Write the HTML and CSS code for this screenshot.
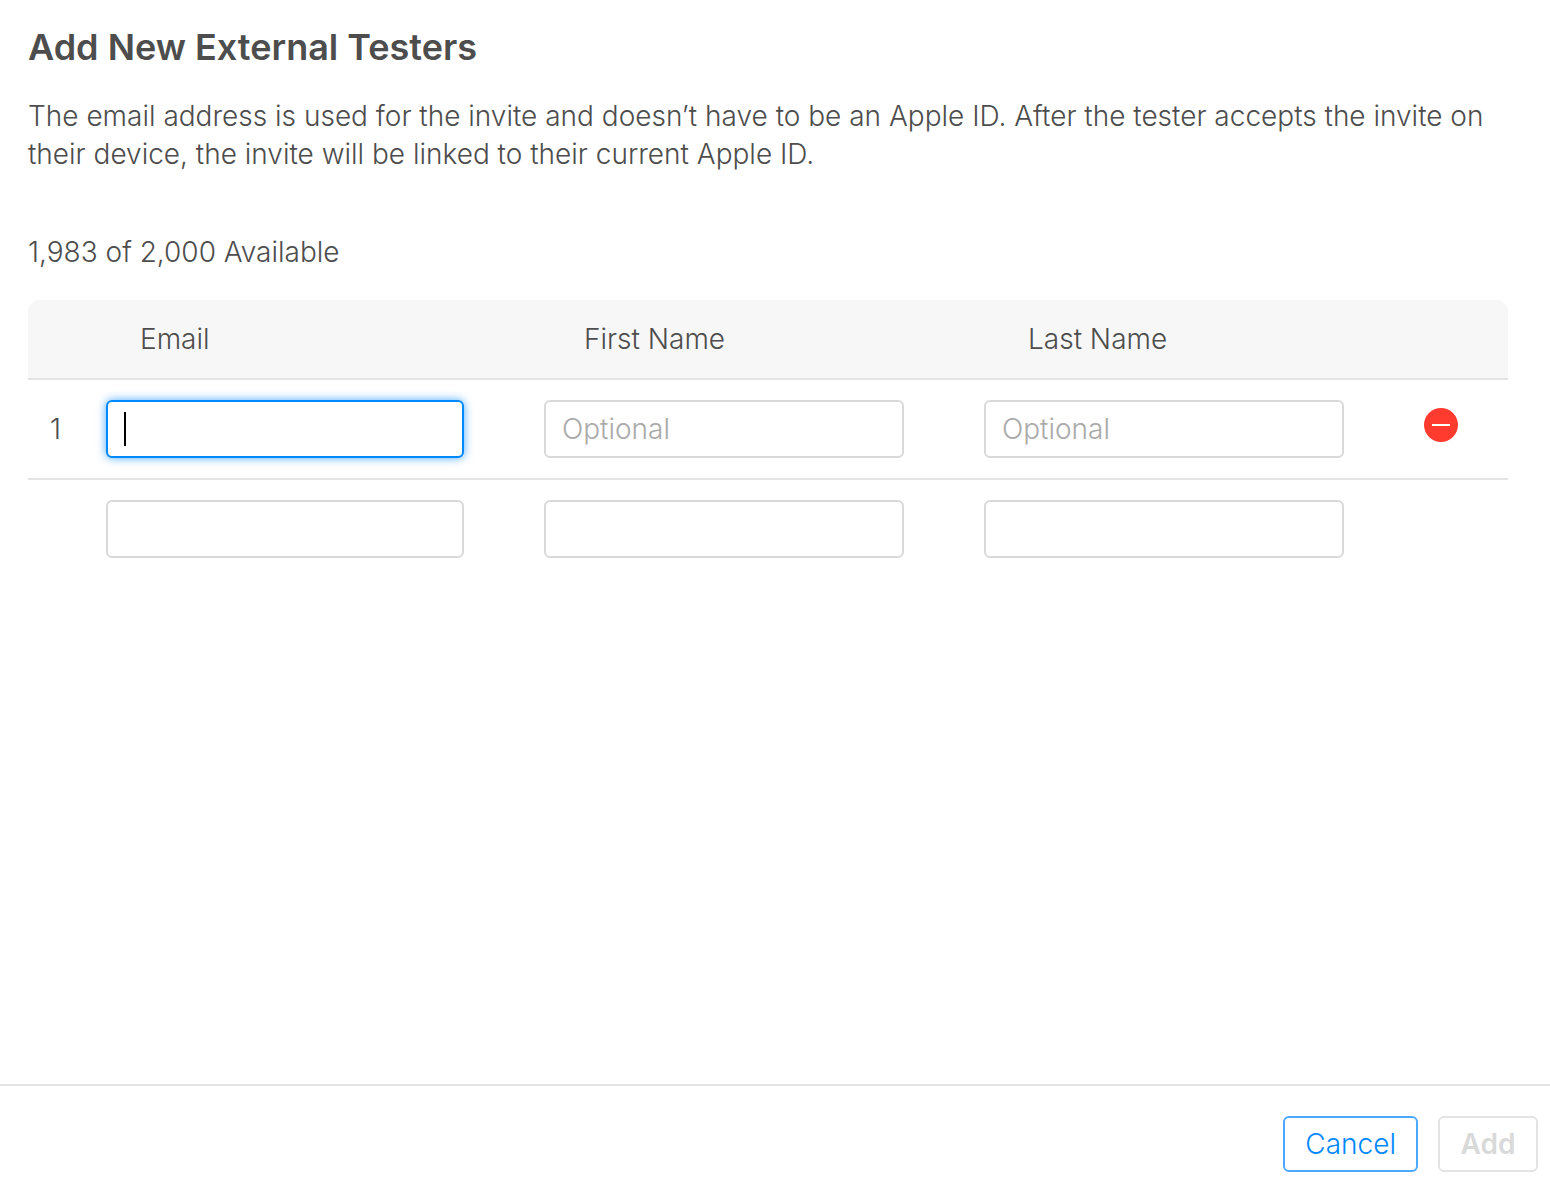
FILE: index.html
```html
<!DOCTYPE html>
<html lang="en">
<head>
<meta charset="utf-8">
<meta name="viewport" content="width=device-width, initial-scale=1">
<title>Add New External Testers</title>
<link rel="stylesheet" href="styles.css">
</head>
<body>
<form class="dialog">
  <main class="content">
    <h1 class="title">Add New External Testers</h1>
    <p class="intro">The email address is used for the invite and doesn’t have to be an Apple ID. After the tester accepts the invite on their device, the invite will be linked to their current Apple ID.</p>
    <p class="available">1,983 of 2,000 Available</p>

    <table class="testers">
      <thead>
        <tr class="head-row">
          <th></th>
          <th scope="col" id="col-email">Email</th>
          <th scope="col" id="col-first">First Name</th>
          <th scope="col" id="col-last">Last Name</th>
        </tr>
      </thead>
      <tbody>
        <tr class="row">
          <td class="number">1</td>
          <td class="cell">
            <div class="field-wrap">
              <input class="field field-active" type="email" aria-labelledby="col-email">
              <span class="caret"></span>
            </div>
          </td>
          <td class="cell"><input class="field" type="text" placeholder="Optional" aria-labelledby="col-first"></td>
          <td class="cell"><input class="field" type="text" placeholder="Optional" aria-labelledby="col-last"></td>
          <td class="action">
            <button class="remove" type="button" aria-label="Remove tester">
              <svg width="34" height="34" viewBox="0 0 34 34" aria-hidden="true">
                <circle cx="17" cy="17" r="17" fill="#ff3b30"/>
                <rect x="8" y="16" width="18" height="2" fill="#fff"/>
              </svg>
            </button>
          </td>
        </tr>
        <tr class="row">
          <td class="number"></td>
          <td class="cell"><input class="field" type="email" aria-labelledby="col-email"></td>
          <td class="cell"><input class="field" type="text" aria-labelledby="col-first"></td>
          <td class="cell"><input class="field" type="text" aria-labelledby="col-last"></td>
          <td class="action"></td>
        </tr>
      </tbody>
    </table>
  </main>

  <footer class="footer">
    <button class="button cancel" type="button">Cancel</button>
    <button class="button add" type="submit" disabled>Add</button>
  </footer>
</form>
</body>
</html>
```
FILE: styles.css
```css
* {
  box-sizing: border-box;
}

body {
  margin: 0;
  background: #fff;
  color: #4d4d4d;
  font: 300 28px/38px Inter, "Liberation Sans", sans-serif;
}

.dialog {
  display: flex;
  flex-direction: column;
  min-height: 100vh;
}

.content {
  flex: 1;
  padding: 24px 42px 24px 28px;
}

.title {
  margin: 0 0 27px;
  font-size: 36px;
  line-height: 46px;
  font-weight: 600;
}

.intro {
  margin: 0 0 60px;
}

.available {
  margin: 0 0 29px;
}

/* Table */

.testers,
.testers thead,
.testers tbody {
  display: block;
}

.head-row {
  display: grid;
  grid-template-columns: 112px 444fr 444fr 480fr;
  border-bottom: 2px solid #e3e3e3;
  background: #f7f7f7;
}

.testers {
  overflow: hidden;
  border-radius: 12px 12px 0 0;
}

.head-row th {
  padding: 20px 0;
  font-weight: 300;
  text-align: left;
}

.row {
  display: grid;
  grid-template-columns: 78px 438fr 440fr 440fr 84px;
  border-bottom: 2px solid #e3e3e3;
}

.row:last-child {
  border-bottom: 0;
}

.number {
  padding: 30px 22px;
}

.cell {
  padding: 20px 80px 20px 0;
}

.action {
  padding: 28px 0;
}

.field-wrap {
  position: relative;
}

.field {
  display: block;
  width: 100%;
  height: 58px;
  padding: 0 16px;
  border: 2px solid #d9d9d9;
  border-radius: 6px;
  background: #fff;
  color: #4d4d4d;
  font: inherit;
  outline: none;
}

.field::placeholder {
  color: #aaa;
  opacity: 1;
}

.field-active {
  border-color: #08f;
  box-shadow: 0 0 10px rgba(0, 136, 255, 0.7);
}

.caret {
  position: absolute;
  top: 12px;
  left: 18px;
  width: 2px;
  height: 34px;
  background: #000;
}

.remove {
  display: block;
  padding: 0;
  border: 0;
  background: none;
  cursor: pointer;
}

.remove svg {
  display: block;
}

/* Footer */

.footer {
  display: flex;
  justify-content: flex-end;
  gap: 20px;
  padding: 30px 12px 10px;
  border-top: 2px solid #e3e3e3;
}

.button {
  min-width: 100px;
  height: 56px;
  padding: 0 20px;
  border: 2px solid #e3e3e3;
  border-radius: 6px;
  background: #fff;
  font: inherit;
}

.cancel {
  border-color: #4da9ff;
  color: #08f;
}

.add {
  color: #d9d9d9;
  font-weight: 600;
}
```
